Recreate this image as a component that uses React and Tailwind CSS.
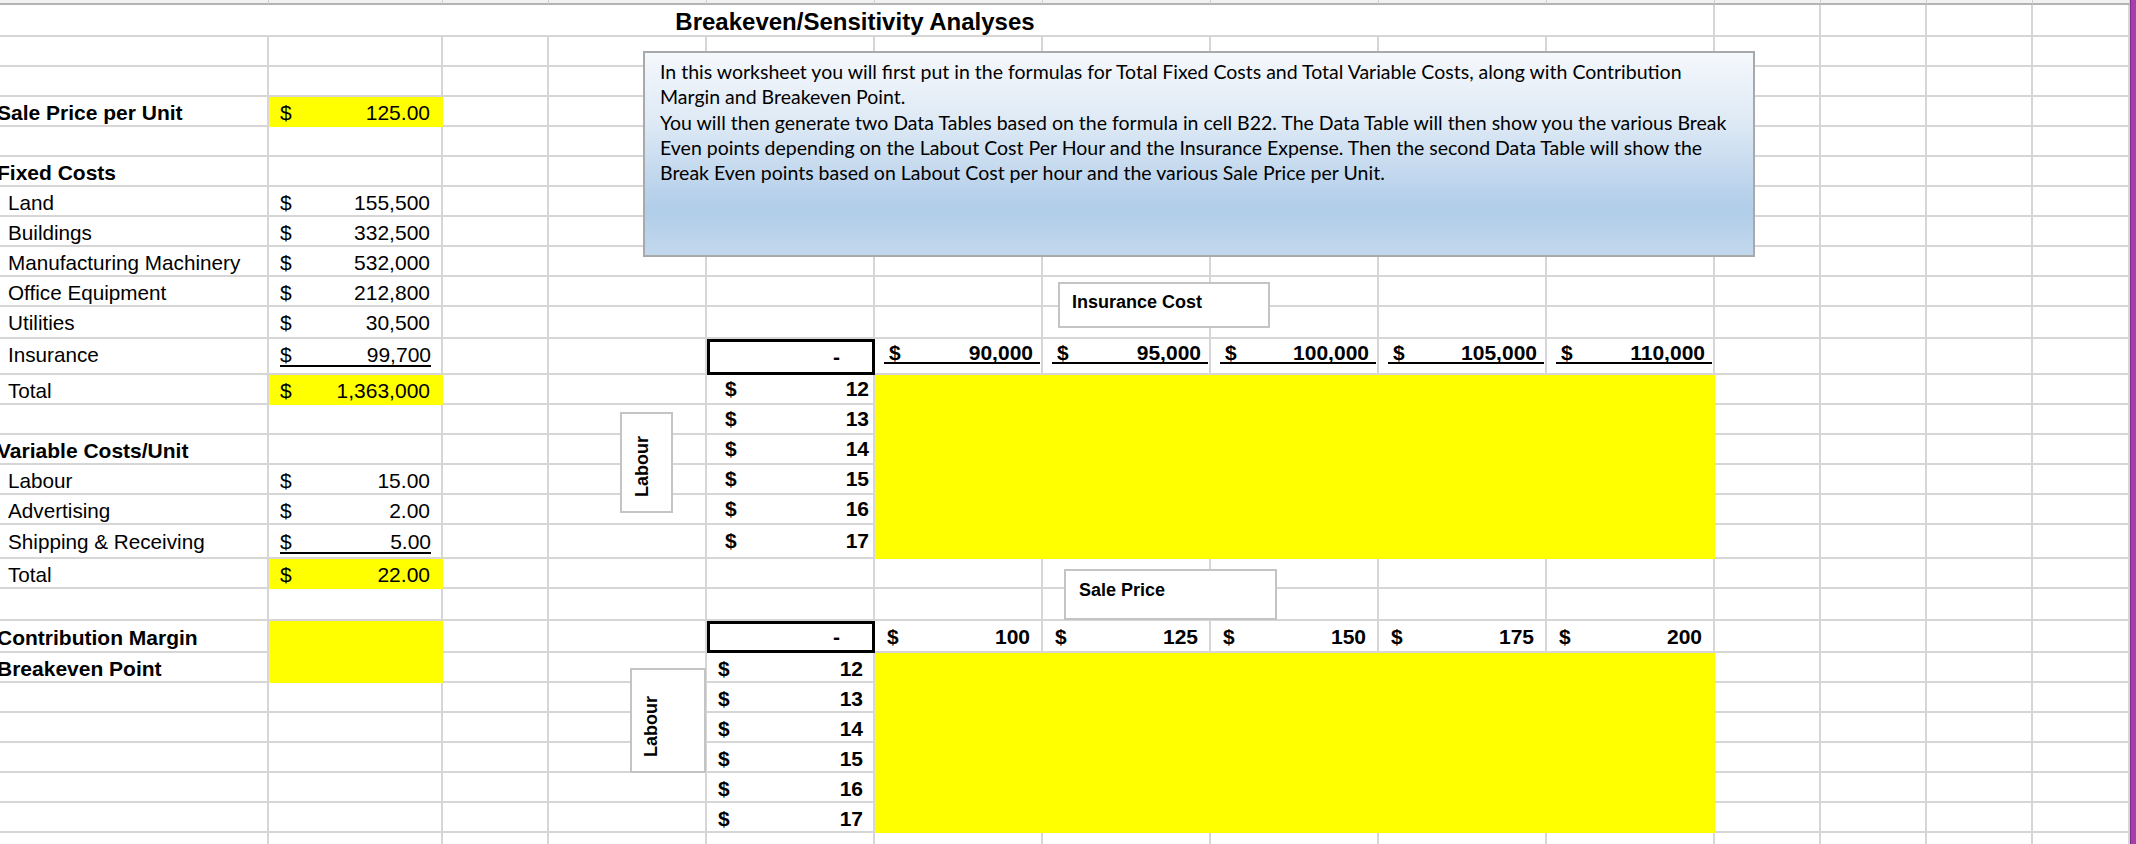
import React from 'react'

const GRD = 'border-[#d6d6d6]'
const YEL = 'bg-[#ffff00] border-[#ffff00]'

const fixedCosts = [
  ['Land', '155,500'],
  ['Buildings', '332,500'],
  ['Manufacturing Machinery', '532,000'],
  ['Office Equipment', '212,800'],
  ['Utilities', '30,500'],
  ['Insurance', '99,700', true],
]

const varCosts = [
  ['Labour', '15.00'],
  ['Advertising', '2.00'],
  ['Shipping & Receiving', '5.00', true],
]

const insurance = ['90,000', '95,000', '100,000', '105,000', '110,000']
const prices = ['100', '125', '150', '175', '200']
const rates = ['12', '13', '14', '15', '16', '17']

// build the sheet: 29 grid rows x 14 columns (A..N)
const rows = Array.from({ length: 29 }, () => Array(14).fill(null))

rows[4][0] = { kind: 'label', text: 'Sale Price per Unit', bold: true }
rows[4][1] = { kind: 'money', value: '125.00', fill: true }
rows[6][0] = { kind: 'label', text: 'Fixed Costs', bold: true }
fixedCosts.forEach(([label, value, under], i) => {
  rows[7 + i][0] = { kind: 'label', text: label }
  rows[7 + i][1] = { kind: 'money', value, under }
})
rows[13][0] = { kind: 'label', text: 'Total' }
rows[13][1] = { kind: 'money', value: '1,363,000', fill: true }
rows[15][0] = { kind: 'label', text: 'Variable Costs/Unit', bold: true }
varCosts.forEach(([label, value, under], i) => {
  rows[16 + i][0] = { kind: 'label', text: label }
  rows[16 + i][1] = { kind: 'money', value, under }
})
rows[19][0] = { kind: 'label', text: 'Total' }
rows[19][1] = { kind: 'money', value: '22.00', fill: true }
rows[21][0] = { kind: 'label', text: 'Contribution Margin', bold: true }
rows[21][1] = { kind: 'fill' }
rows[22][0] = { kind: 'label', text: 'Breakeven Point', bold: true }
rows[22][1] = { kind: 'fill' }

// data table 1: labour x insurance
rows[12][4] = { kind: 'dash' }
insurance.forEach((v, i) => { rows[12][5 + i] = { kind: 'head', value: v, under: true } })
rates.forEach((v, i) => {
  rows[13 + i][4] = { kind: 'rate', value: v, first: true }
  for (let c = 5; c < 10; c++) rows[13 + i][c] = { kind: 'fill' }
})

// data table 2: labour x sale price
rows[21][4] = { kind: 'dash' }
prices.forEach((v, i) => { rows[21][5 + i] = { kind: 'head', value: v } })
rates.forEach((v, i) => {
  rows[22 + i][4] = { kind: 'rate', value: v }
  for (let c = 5; c < 10; c++) rows[22 + i][c] = { kind: 'fill' }
})

// rows 12 and 18 are taller and sit their text near the top
const topAlign = { 12: 'mt-[6px] leading-[20px]', 18: 'mt-[7px] leading-[20px]' }
// left block text sits a little lower than the data table text
const drop = r => (topAlign[r] ? '' : r === 11 ? 'pt-[2px]' : 'pt-[4px]')

function SheetCell({ c, r }) {
  const cell = 'flex min-w-0 border-r-2 border-b-2'
  const align = topAlign[r] ? 'items-start' : 'items-center'
  const inner = topAlign[r] || ''

  if (!c) return <div className={`${cell} ${GRD}`} />
  if (c.kind === 'fill') return <div className={`${cell} ${YEL}`} />

  if (c.kind === 'label') {
    return (
      <div className={`${cell} ${GRD} ${align} ${drop(r)}`}>
        <span className={`whitespace-nowrap ${inner} ${c.bold ? 'font-bold' : 'pl-[11px] text-[20.7px]'}`}>{c.text}</span>
      </div>
    )
  }

  if (c.kind === 'money') {
    return (
      <div className={`${cell} ${c.fill ? YEL : GRD} ${align} ${drop(r)}`}>
        {c.under ? (
          <div className={`ml-[11px] mr-[10px] flex flex-1 justify-between border-b-2 border-black ${inner}`}>
            <span>$</span>
            <span>{c.value}</span>
          </div>
        ) : (
          <div className="flex flex-1 justify-between pl-[11px] pr-[11px]">
            <span>$</span>
            <span>{c.value}</span>
          </div>
        )}
      </div>
    )
  }

  if (c.kind === 'dash') {
    return (
      <div className="flex items-center justify-end border-[3px] border-black pr-[32px] font-bold">-</div>
    )
  }

  if (c.kind === 'head') {
    return (
      <div className={`${cell} ${GRD} ${c.under ? 'items-start' : 'items-center pt-[2px]'} font-bold`}>
        {c.under ? (
          <div className="mt-[5px] mr-[1px] ml-[9px] flex flex-1 justify-between border-b-2 border-black pr-[7px] pl-[5px] leading-[18px]">
            <span>$</span>
            <span>{c.value}</span>
          </div>
        ) : (
          <div className="flex flex-1 justify-between pr-[11px] pl-[12px]">
            <span>$</span>
            <span>{c.value}</span>
          </div>
        )}
      </div>
    )
  }

  if (c.kind === 'rate') {
    return (
      <div className={`${cell} ${GRD} items-center font-bold ${c.first ? '' : 'pt-[3px]'}`}>
        <div className={`flex flex-1 justify-between ${c.first ? 'pr-[4px] pl-[18px]' : 'pr-[10px] pl-[11px]'}`}>
          <span>$</span>
          <span>{c.value}</span>
        </div>
      </div>
    )
  }
  return null
}

function LabourTag({ className, pad }) {
  return (
    <div className={`absolute flex items-center border-2 border-[#c4c4c4] bg-white ${className} ${pad}`}>
      <span className="rotate-180 text-[18px] leading-[18px] font-bold [writing-mode:vertical-rl]">Labour</span>
    </div>
  )
}

export default function App() {
  return (
    <div className="flex h-[844px] w-[2136px] overflow-hidden bg-white font-['Liberation_Sans',Arial,sans-serif] text-[21px] leading-[24px] text-black">
      <div className="relative flex-1 overflow-hidden">
        <div className="ml-[-3px] grid grid-cols-[272px_174px_106px_158px_168px_168px_168px_168px_168px_168px_106px_106px_106px_97px] grid-rows-[5px_32px_repeat(9,30px)_32px_36px_repeat(5,30px)_34px_30px_32px_32px_repeat(7,30px)]">
          {/* column header strip */}
          {Array.from({ length: 14 }, (_, i) => (
            <div key={`h${i}`} className="border-r border-b-2 border-r-[#cfcfcf] border-b-[#b3b3b3] bg-[#f2f2f2]" />
          ))}

          {/* title row, merged across A:J */}
          <div className="col-span-10 flex items-center justify-center border-r-2 border-b-2 border-[#d6d6d6] pt-[3px] text-[24px] font-bold">
            Breakeven/Sensitivity Analyses
          </div>
          {Array.from({ length: 4 }, (_, i) => (
            <div key={`t${i}`} className={`border-r-2 border-b-2 ${GRD}`} />
          ))}

          {rows.slice(2).map((row, k) =>
            row.map((c, col) => <SheetCell key={`${k + 2}-${col}`} c={c} r={k + 2} />)
          )}
        </div>

        {/* instructions text box */}
        <div className="absolute top-[51px] left-[643px] h-[206px] w-[1112px] border-2 border-[#a9a9a9] bg-[linear-gradient(180deg,#f5f8fc_0%,#dde9f5_35%,#c2d8ee_60%,#b0cde9_78%,#c3d8ed_100%)] pt-[6px] pl-[15px] font-['Lato',sans-serif] text-[19.5px] leading-[25.3px] text-black">
          <div className="whitespace-nowrap">In this worksheet you will first put in the formulas for Total Fixed Costs and Total Variable Costs, along with Contribution</div>
          <div className="whitespace-nowrap">Margin and Breakeven Point.</div>
          <div className="whitespace-nowrap">You will then generate two Data Tables based on the formula in cell B22. The Data Table will then show you the various Break</div>
          <div className="whitespace-nowrap">Even points depending on the Labout Cost Per Hour and the Insurance Expense. Then the second Data Table will show the</div>
          <div className="whitespace-nowrap">Break Even points based on Labout Cost per hour and the various Sale Price per Unit.</div>
        </div>

        {/* axis captions */}
        <div className="absolute top-[282px] left-[1058px] flex h-[46px] w-[212px] items-center border-2 border-[#c4c4c4] bg-white pb-[6px] pl-[12px] text-[18px] font-bold">
          Insurance Cost
        </div>
        <div className="absolute top-[569px] left-[1064px] flex h-[51px] w-[213px] items-center border-2 border-[#c4c4c4] bg-white pb-[9px] pl-[13px] text-[18px] font-bold">
          Sale Price
        </div>
        <LabourTag className="top-[412px] left-[620px] h-[101px] w-[53px]" pad="pt-[7px] pl-[11px]" />
        <LabourTag className="top-[668px] left-[630px] h-[105px] w-[76px]" pad="pt-[11px] pl-[10px]" />
      </div>

      {/* edge of the neighbouring window */}
      <div className="w-[6px] border-l border-[#7f2b86] bg-[#a63fab]" />
    </div>
  )
}
